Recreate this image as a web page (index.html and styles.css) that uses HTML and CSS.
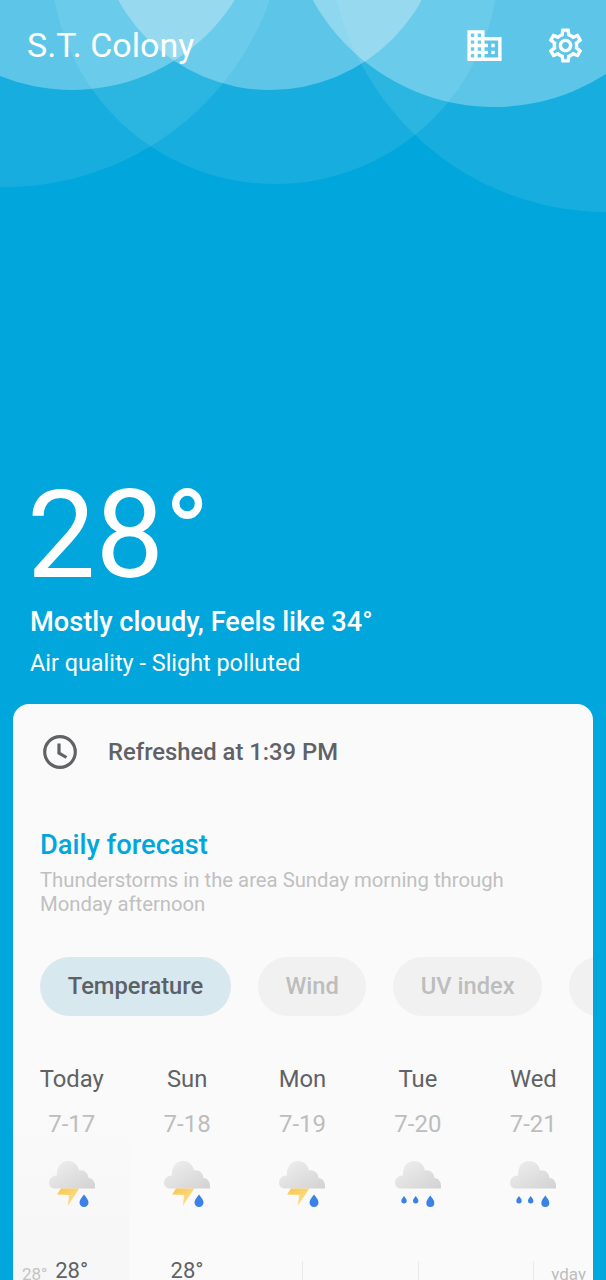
FILE: index.html
```html
<!DOCTYPE html>
<html lang="en">
<head>
    <meta charset="UTF-8" />
    <meta name="viewport" content="width=device-width, initial-scale=1.0" />
    <title>S.T. Colony weather</title>
    <link rel="stylesheet" href="styles.css">
</head>
<body>

<!-- shared weather icons -->
<svg class="defs" width="0" height="0">
    <defs>
        <linearGradient id="cloudFill" x1="0" y1="0" x2="1" y2="1">
            <stop offset="0" stop-color="#f0f0f0" />
            <stop offset="1" stop-color="#d2d2d2" />
        </linearGradient>
        <linearGradient id="boltFill" x1="0" y1="0" x2="1" y2="1">
            <stop offset="0" stop-color="#f8c64e" />
            <stop offset="1" stop-color="#fde59a" />
        </linearGradient>
        <symbol id="cloud" viewBox="0 0 46 46">
            <path fill="url(#cloudFill)" d="M6 27.5C2.5 27.5 0 25 0 22c0-4.500 3.500-7.800 8-7.500C7.500 6 12 0 19 0c6 0 10 4 11 9.500 5-1 9 2.500 9.500 7.500 3.500 0 6.500 3.500 6.500 7.500v3z" />
        </symbol>
        <symbol id="storm" viewBox="0 0 46 46">
            <use href="#cloud" width="46" height="46" />
            <path fill="url(#boltFill)" d="M12 27.500h18.300L18.700 45l1.600-11L8 33.500z" />
            <path fill="#3b82e6" d="M35 33.500c2 2.800 4.500 5 4.500 8a4.500 4.500 0 0 1-9 0c0-3 2.500-5.200 4.500-8z" />
        </symbol>
        <symbol id="rain" viewBox="0 0 46 46">
            <use href="#cloud" width="46" height="46" />
            <path fill="#3b82e6" d="M9 35c1.200 1.800 2.700 3 2.700 4.700a2.700 2.700 0 0 1-5.400 0C6.300 38 7.800 36.800 9 35z" />
            <path fill="#3b82e6" d="M20.700 35c1.200 1.800 2.700 3 2.700 4.700a2.700 2.700 0 0 1-5.400 0c0-1.700 1.500-2.900 2.700-4.700z" />
            <path fill="#3b82e6" d="M35.300 34.500c2 2.800 4 4.800 4 7.500a4 4 0 0 1-8 0c0-2.700 2-4.700 4-7.500z" />
        </symbol>
    </defs>
</svg>

<div class="page">
    <svg class="waves" width="606" height="220" viewBox="0 0 606 220">
        <g fill="#fff" fill-opacity="0.09">
            <circle cx="5" cy="-94" r="281" />
            <circle cx="275" cy="-40" r="224" />
            <circle cx="607" cy="-66" r="278" />
        </g>
        <g fill="#fff" fill-opacity="0.3">
            <circle cx="72" cy="-102" r="192" />
            <circle cx="270" cy="-83" r="173" />
            <circle cx="494" cy="-100" r="207" />
        </g>
    </svg>

    <header class="topbar">
        <h1 class="city">S.T. Colony</h1>
        <div class="topbar-icons">
            <svg class="icon" viewBox="0 0 24 24"><path d="M12 7V3H2v18h20V7H12zM6 19H4v-2h2v2zm0-4H4v-2h2v2zm0-4H4V9h2v2zm0-4H4V5h2v2zm4 12H8v-2h2v2zm0-4H8v-2h2v2zm0-4H8V9h2v2zm0-4H8V5h2v2zm10 12h-8v-2h2v-2h-2v-2h2v-2h-2V9h8v10zm-2-8h-2v2h2v-2zm0 4h-2v2h2v-2z" /></svg>
            <svg class="icon" viewBox="0 0 24 24"><path d="M19.430 12.980c.04-.32.07-.64.07-.98 0-.34-.03-.66-.07-.98l2.110-1.650c.19-.15.24-.42.12-.64l-2-3.460c-.09-.16-.26-.25-.44-.25-.06 0-.12.01-.17.03l-2.490 1c-.52-.4-1.080-.73-1.690-.98l-.38-2.650C14.460 2.180 14.250 2 14 2h-4c-.25 0-.46.18-.49.42l-.38 2.650c-.61.25-1.170.59-1.690.98l-2.490-1c-.06-.02-.12-.03-.18-.03-.17 0-.34.09-.43.25l-2 3.460c-.13.22-.07.49.12.64l2.110 1.650c-.04.32-.07.65-.07.98 0 .33.03.66.07.98l-2.110 1.650c-.19.15-.24.42-.12.64l2 3.460c.09.16.26.25.44.25.06 0 .12-.01.17-.03l2.490-1c.52.4 1.080.73 1.690.98l.38 2.650c.03.24.24.42.49.42h4c.25 0 .46-.18.49-.42l.38-2.650c.61-.25 1.170-.59 1.690-.98l2.490 1c.06.02.12.03.18.03.17 0 .34-.09.43-.25l2-3.460c.12-.22.07-.49-.12-.64l-2.110-1.650zm-1.980-1.710c.04.31.05.52.05.73 0 .21-.02.43-.05.73l-.14 1.130.89.7 1.080.84-.7 1.210-1.270-.51-1.040-.42-.9.68c-.43.32-.84.56-1.250.73l-1.060.43-.16 1.130-.2 1.350h-1.400l-.19-1.350-.16-1.130-1.060-.43c-.43-.18-.83-.41-1.230-.71l-.91-.7-1.060.43-1.270.51-.7-1.210 1.080-.84.89-.7-.14-1.130c-.03-.31-.05-.54-.05-.74s.02-.43.05-.73l.14-1.130-.89-.7-1.080-.84.7-1.210 1.270.51 1.040.42.9-.68c.43-.32.84-.56 1.250-.73l1.060-.43.16-1.130.2-1.350h1.390l.19 1.350.16 1.130 1.060.43c.43.18.83.41 1.230.71l.91.7 1.060-.43 1.270-.51.7 1.210-1.070.85-.89.7.14 1.130zM12 8c-2.210 0-4 1.790-4 4s1.790 4 4 4 4-1.790 4-4-1.790-4-4-4zm0 6c-1.100 0-2-.9-2-2s.9-2 2-2 2 .9 2 2-.9 2-2 2z" /></svg>
        </div>
    </header>

    <section class="current">
        <div class="temp">28°</div>
        <p class="summary">Mostly cloudy, Feels like 34°</p>
        <p class="air">Air quality - Slight polluted</p>
    </section>

    <main class="card">
        <div class="refreshed">
            <svg class="clock" viewBox="0 0 34 34">
                <circle cx="17" cy="17" r="15.300" />
                <path d="M16 8.500v9.500l7.500 4.500" />
            </svg>
            <span>Refreshed at 1:39 PM</span>
        </div>

        <h2 class="card-title">Daily forecast</h2>
        <p class="card-note">Thunderstorms in the area Sunday morning through Monday afternoon</p>

        <div class="chips">
            <span class="chip chip-active">Temperature</span>
            <span class="chip">Wind</span>
            <span class="chip">UV index</span>
            <span class="chip chip-blank"></span>
        </div>

        <div class="days">
            <div class="day day-today">
                <div class="day-name">Today</div>
                <div class="day-date">7-17</div>
                <svg class="day-icon"><use href="#storm" /></svg>
                <div class="day-temp">28°<span class="side-left">28°</span></div>
            </div>
            <div class="day">
                <div class="day-name">Sun</div>
                <div class="day-date">7-18</div>
                <svg class="day-icon"><use href="#storm" /></svg>
                <div class="day-temp">28°</div>
            </div>
            <div class="day">
                <div class="day-name">Mon</div>
                <div class="day-date">7-19</div>
                <svg class="day-icon"><use href="#storm" /></svg>
                <div class="day-temp day-line"></div>
            </div>
            <div class="day">
                <div class="day-name">Tue</div>
                <div class="day-date">7-20</div>
                <svg class="day-icon"><use href="#rain" /></svg>
                <div class="day-temp day-line"></div>
            </div>
            <div class="day">
                <div class="day-name">Wed</div>
                <div class="day-date">7-21</div>
                <svg class="day-icon"><use href="#rain" /></svg>
                <div class="day-temp day-line"><span class="side-right">yday</span></div>
            </div>
        </div>
    </main>
</div>

</body>
</html>
```

FILE: styles.css
```css
* {
    box-sizing: border-box;
}
html, body {
    margin: 0;
    padding: 0;
}
body {
    font-family: Roboto, "Liberation Sans", sans-serif;
    background: #00a6dc;
}
.defs {
    position: absolute;
}
.page {
    position: relative;
    height: 1280px;
    overflow: hidden;
    background: #00a6dc;
}
.waves {
    position: absolute;
    top: 0;
    left: 0;
}

/* top bar */
.topbar {
    position: relative;
    display: flex;
    justify-content: space-between;
    align-items: center;
    height: 90px;
    padding: 0 20px 0 27px;
    color: #fff;
}
.city {
    margin: 0;
    font-size: 34px;
    font-weight: 400;
}
.topbar-icons {
    display: flex;
    gap: 40px;
}
.icon {
    width: 41px;
    height: 41px;
    fill: #fff;
}

/* current conditions */
.current {
    position: relative;
    padding: 382px 30px 0;
    color: #fff;
}
.temp {
    margin-left: -3px;
    font-size: 122px;
    font-weight: 400;
    line-height: 128px;
}
.summary {
    margin: 6px 0 0;
    font-size: 27.200px;
    font-weight: 500;
    line-height: 32px;
}
.air {
    margin: 10px 0 0;
    font-size: 23.400px;
    line-height: 30px;
}

/* forecast card */
.card {
    position: relative;
    margin: 26px 13px 0;
    height: 640px;
    border-radius: 16px;
    background: #fafafa;
    overflow: hidden;
}
.refreshed {
    display: flex;
    align-items: center;
    gap: 31px;
    padding: 31px 0 0 30px;
    font-size: 23.800px;
    font-weight: 500;
    color: #606266;
}
.clock {
    width: 34px;
    height: 34px;
    fill: none;
    stroke: #606266;
    stroke-width: 3.200;
}
.card-title {
    margin: 59px 0 0 27px;
    font-size: 27.300px;
    font-weight: 500;
    line-height: 34px;
    color: #00a6dc;
}
.card-note {
    margin: 6px 27px 0;
    font-size: 20.300px;
    line-height: 24px;
    color: #c0c0c0;
}
.chips {
    display: flex;
    gap: 27px;
    margin-top: 41px;
    padding-left: 27px;
}
.chip {
    flex: none;
    padding: 0 27.500px;
    height: 59px;
    border-radius: 30px;
    background: #f1f1f1;
    color: #bdbdbd;
    font-size: 23.700px;
    font-weight: 500;
    line-height: 59px;
}
.chip-active {
    padding: 0 27.800px;
    background: #d8e8ef;
    color: #5c6166;
}
.chip-blank {
    width: 120px;
}

/* day columns */
.days {
    display: grid;
    grid-template-columns: repeat(5, 1fr);
    margin-top: 42px;
    padding: 0 2px 0 1px;
}
.day {
    position: relative;
    display: flex;
    flex-direction: column;
    align-items: center;
}
.day-today {
    margin-left: -1px;
    padding-left: 1px;
    background: linear-gradient(#fafafa 10%, #f6f6f6 100%);
}
.day-name {
    font-size: 23.800px;
    line-height: 42px;
    color: #606266;
}
.day-date {
    margin-top: 3px;
    font-size: 24px;
    line-height: 42px;
    color: #bdbdbd;
}
.day-icon {
    width: 46px;
    height: 46px;
    margin-top: 16px;
}
.day-temp {
    position: relative;
    width: 100%;
    height: 40px;
    margin-top: 50px;
    font-size: 22px;
    line-height: 28px;
    color: #606266;
    text-align: center;
}
.day-line::before {
    content: "";
    position: absolute;
    left: 50%;
    top: 4px;
    bottom: 0;
    border-left: 1px solid #eaeaea;
}
.side-left {
    position: absolute;
    left: 8px;
    top: 3px;
    font-size: 17px;
    color: #c4c4c4;
}
.side-right {
    position: absolute;
    right: 5px;
    top: 3px;
    font-size: 17px;
    color: #bdbdbd;
}
```
